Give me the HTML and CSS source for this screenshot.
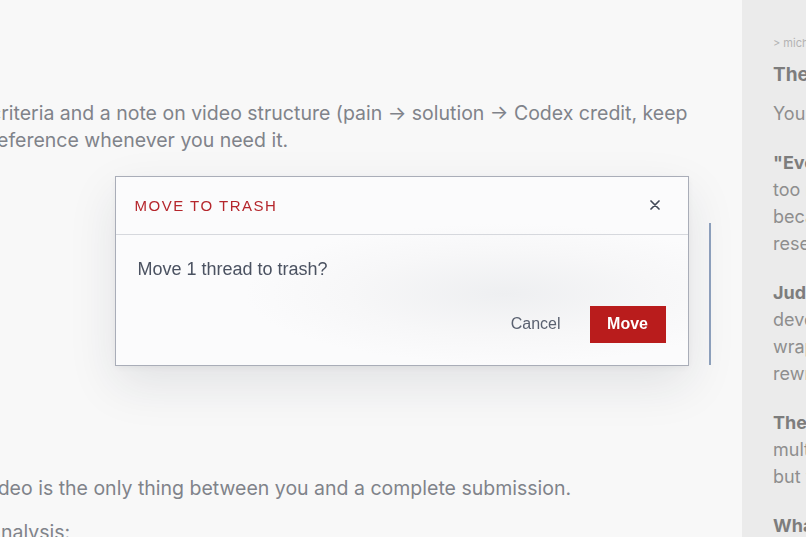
FILE: index.html
```html
<!DOCTYPE html>
<html lang="en">
<head>
  <meta charset="UTF-8">
  <title>Move to trash</title>
  <link rel="stylesheet" href="styles.css">
</head>
<body>
  <div class="app">
    <main class="main">
      <div class="content">
        <p class="lead-in">one</p>
        <p class="para-first">criteria and a note on video structure (pain → solution → Codex credit, keep reference whenever you need it.</p>

        <div class="card">
          <p>Submission checklist</p>
        </div>

        <p class="para-video">video is the only thing between you and a complete submission.</p>
        <p class="para-last">analysis:</p>
      </div>
    </main>

    <aside class="side">
      <div class="crumb">&gt; michael / submissions / review</div>
      <h3>The verdict</h3>
      <p>You're almost there.</p>
      <p><b>"Every demo looks the same"</b><br>too many projects lean on the same<br>because judges have already seen<br>research assistants this week.</p>
      <p><b>Judges reward clarity.</b><br>developers want to see what you<br>wrapped around the model and<br>rewrote for your use case.</p>
      <p><b>The video matters most.</b><br>multiple judges skim the repo<br>but watch every second.</p>
      <p><b>What to do next</b></p>
    </aside>
  </div>

  <div class="overlay">
    <div class="dialog">
      <div class="dialog-head">
        <span class="dialog-title">Move to trash</span>
        <button class="close" aria-label="Close">
          <svg width="10" height="10" viewBox="0 0 10 10"><path d="M1 1 L9 9 M9 1 L1 9" stroke="#414857" stroke-width="1.7" stroke-linecap="round"/></svg>
        </button>
      </div>
      <div class="dialog-body">
        <p class="dialog-msg">Move 1 thread to trash?</p>
        <div class="dialog-actions">
          <button class="btn-cancel">Cancel</button>
          <button class="btn-move">Move</button>
        </div>
      </div>
    </div>
  </div>
</body>
</html>
```

FILE: styles.css
```css
html, body {
  margin: 0;
  height: 100%;
  overflow: hidden;
}

body {
  font-family: Inter, 'Liberation Sans', sans-serif;
  background: #f8f8f8;
}

.app {
  display: flex;
  height: 100vh;
  width: 100vw;
  overflow: hidden;
}

/* background page */
.main {
  flex: 0 0 742px;
  overflow: hidden;
  color: #80838a;
  font-size: 19.5px;
  line-height: 27px;
}

.content {
  margin-left: -10px;
  width: 721px;
}

.content p {
  margin: 0;
}

.lead-in {
  margin-top: -20px !important;
}

.para-first {
  margin-top: 93px !important;
}

.card {
  margin-top: 69px;
  height: 142px;
  border-right: 2px solid #8fa2bd;
  color: transparent;
}

.para-video {
  margin-top: 110px !important;
  margin-left: -8px !important;
}

.para-last {
  margin-top: 17px !important;
}

.side {
  flex: 0 0 320px;
  background: #ebebeb;
  padding: 36px 0 0 31px;
  color: #8e8e8e;
  font-size: 18px;
  line-height: 27px;
  white-space: nowrap;
}

.crumb {
  font-size: 11px;
  line-height: 14px;
  color: #b3b3b3;
}

.side h3 {
  margin: 11px 0 12px;
  font-size: 19px;
  line-height: 27px;
  color: #7d7d7d;
}

.side p {
  margin: 0 0 22px;
}

.side b {
  color: #7d7d7d;
}

/* dialog */
.overlay {
  position: fixed;
  top: 0;
  left: 0;
  right: 0;
  bottom: 0;
  display: flex;
  justify-content: center;
  align-items: center;
  padding: 4px 3px 0 0;
}

.dialog {
  width: 572px;
  border: 1px solid #a9adb8;
  background: radial-gradient(ellipse 260px 70px at 68% 62%, #eeeff1 0%, #f7f7f8 60%, #fbfbfc 100%);
  box-shadow: 0 18px 45px rgba(30, 40, 60, 0.10), 0 2px 8px rgba(30, 40, 60, 0.05);
  font-family: 'Liberation Sans', Arial, sans-serif;
}

.dialog-head {
  height: 57px;
  display: flex;
  align-items: center;
  justify-content: space-between;
  padding: 0 24px 0 19px;
  border-bottom: 1px solid #d6d8dd;
}

.dialog-title {
  text-transform: uppercase;
  font-size: 15px;
  letter-spacing: 1.5px;
  color: #b5262c;
}

.close {
  background: none;
  border: none;
  padding: 4px;
  cursor: pointer;
  display: flex;
}

.dialog-body {
  padding: 22px 22px 22px 22px;
}

.dialog-msg {
  margin: 0;
  font-size: 18px;
  line-height: 25px;
  color: #4b5261;
}

.dialog-actions {
  display: flex;
  justify-content: flex-end;
  align-items: center;
  gap: 17px;
  margin-top: 24px;
}

.btn-cancel {
  background: none;
  border: none;
  padding: 8px 12px;
  font-family: inherit;
  font-size: 16px;
  color: #5a6170;
  cursor: pointer;
}

.btn-move {
  width: 76px;
  height: 37px;
  border: none;
  background: #b91c1c;
  color: #fff;
  font-family: inherit;
  font-size: 16px;
  font-weight: bold;
  cursor: pointer;
}
```
